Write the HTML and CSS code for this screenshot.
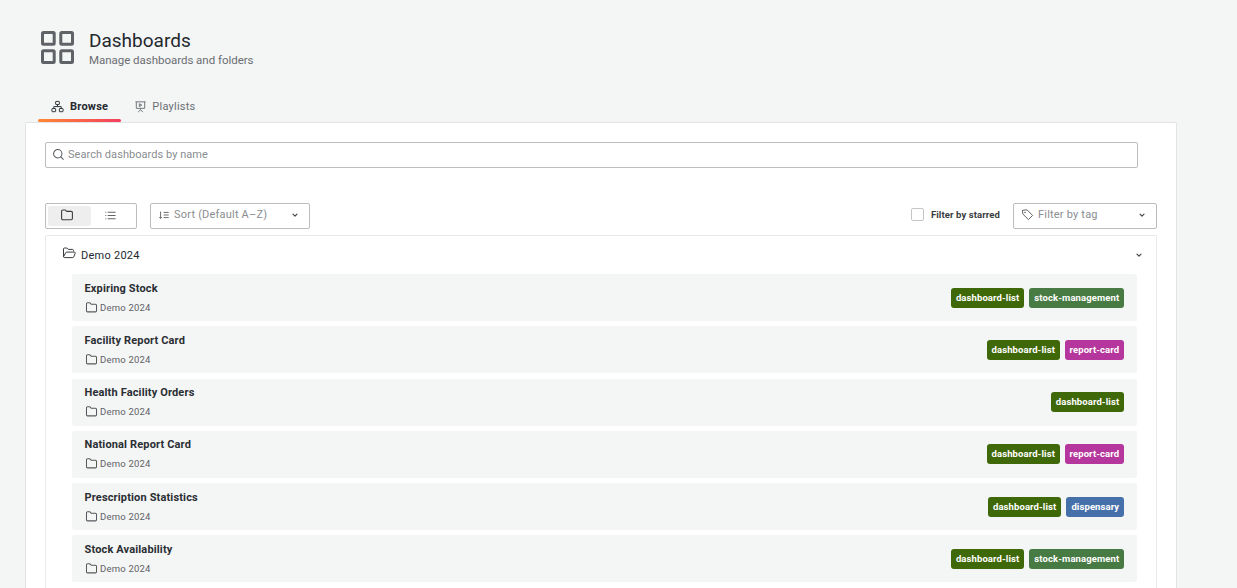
FILE: index.html
```html
<!DOCTYPE html>
<html lang="en">
<head>
<meta charset="utf-8">
<title>Dashboards</title>
<link rel="stylesheet" href="styles.css">
</head>
<body>
<svg class="defs" width="0" height="0" aria-hidden="true">
  <symbol id="folder" viewBox="0 0 14 14"><path d="M1.6 3.2c0-.7.5-1.2 1.2-1.2h2.5l1.3 1.4h4.6c.7 0 1.2.5 1.2 1.2v5.9c0 .7-.5 1.2-1.2 1.2H2.8c-.7 0-1.2-.5-1.2-1.2z" fill="none" stroke="currentColor" stroke-width="1.1" stroke-linejoin="round"/></symbol>
  <symbol id="chev" viewBox="0 0 10 10"><path d="M3 4.200l2 2 2-2" fill="none" stroke="currentColor" stroke-width="1.200" stroke-linecap="round" stroke-linejoin="round"/></symbol>
</svg>
<header class="page-header">
  <svg class="logo" viewBox="0 0 33 33" width="33" height="33" aria-hidden="true">
    <g fill="none" stroke="#5f6266" stroke-width="3">
      <rect x="1.500" y="1.500" width="11.700" height="11.700" rx="1"/>
      <rect x="19.800" y="1.500" width="11.700" height="11.700" rx="1"/>
      <rect x="1.500" y="19.800" width="11.700" height="11.700" rx="1"/>
      <rect x="19.800" y="19.800" width="11.700" height="11.700" rx="1"/>
    </g>
  </svg>
  <div class="titles">
    <h1>Dashboards</h1>
    <p>Manage dashboards and folders</p>
  </div>
</header>
<nav class="tabs">
  <a class="tab active">
    <svg viewBox="0 0 14 14" width="13" height="13" aria-hidden="true"><g fill="none" stroke="currentColor" stroke-width="1"><rect x="5" y="1.500" width="4" height="3.400" rx=".5"/><rect x="1" y="9.200" width="4" height="3.400" rx=".5"/><rect x="9" y="9.200" width="4" height="3.400" rx=".5"/><path d="M7 4.900v2.200M3 9.200V7.100h8v2.100"/></g></svg>
    Browse
  </a>
  <a class="tab">
    <svg viewBox="0 0 14 14" width="13" height="13" aria-hidden="true"><g fill="none" stroke="currentColor" stroke-width="1"><path d="M1.500 2h11M2.500 2v7h9V2M7 9v1.500M4.500 13l2.500-2.500L9.500 13"/><path d="M5.800 4l2.600 1.500-2.600 1.500z"/></g></svg>
    Playlists
  </a>
</nav>
<main class="card">
  <label class="search">
    <svg viewBox="0 0 14 14" width="13" height="13" aria-hidden="true"><circle cx="6.200" cy="6.200" r="4.500" fill="none" stroke="currentColor" stroke-width="1.100"/><path d="M9.500 9.500l2.700 2.700" stroke="currentColor" stroke-width="1.100" stroke-linecap="round"/></svg>
    <span>Search dashboards by name</span>
  </label>
  <div class="toolbar">
    <div class="left">
      <div class="toggle">
        <span class="seg on"><svg width="14" height="14"><use href="#folder"/></svg></span>
        <span class="seg"><svg viewBox="0 0 14 14" width="13" height="13" aria-hidden="true"><path d="M4 3.500h8.500M4 7h8.500M4 10.500h8.500M1.500 3.500h1M1.500 7h1M1.500 10.500h1" stroke="currentColor" stroke-width="1"/></svg></span>
      </div>
      <div class="select sort">
        <svg viewBox="0 0 14 14" width="12" height="12" aria-hidden="true"><path d="M3 3v8M1.500 9.500L3 11l1.500-1.500M6.500 4h6M6.500 7h6M6.500 10h6" fill="none" stroke="currentColor" stroke-width="1"/></svg>
        <span class="ph">Sort (Default A–Z)</span>
        <svg class="chev" width="10" height="10"><use href="#chev"/></svg>
      </div>
    </div>
    <div class="right">
      <label class="starred"><span class="check"></span>Filter by starred</label>
      <div class="select tag">
        <svg viewBox="0 0 14 14" width="13" height="13" aria-hidden="true"><path d="M1.500 2.500l5-.5 6 6-4.500 4.500-6-6z" fill="none" stroke="currentColor" stroke-width="1" stroke-linejoin="round"/><circle cx="4.300" cy="4.800" r=".8" fill="currentColor"/></svg>
        <span class="ph">Filter by tag</span>
        <svg class="chev" width="10" height="10"><use href="#chev"/></svg>
      </div>
    </div>
  </div>
  <section class="panel">
    <div class="folder-head">
      <svg class="open" viewBox="0 0 14 14" width="14" height="14" aria-hidden="true"><path d="M1.500 10.800V3c0-.6.400-1 1-1h2.400l1.300 1.400h4.300c.6 0 1 .4 1 1v1M1.500 10.800c.1.500.5.800 1 .8h8.300c.4 0 .7-.2.900-.6l1.500-3.800c.2-.6-.1-1.100-.7-1.100H4.600c-.4 0-.8.200-.9.600z" fill="none" stroke="currentColor" stroke-width="1" stroke-linejoin="round"/></svg>
      <span class="folder-name">Demo 2024</span>
      <svg class="chev" width="10" height="10"><use href="#chev"/></svg>
    </div>
    <div class="rows">
      <article class="row">
        <div class="info"><h2>Expiring Stock</h2><p><svg width="13" height="13"><use href="#folder"/></svg>Demo 2024</p></div>
        <div class="tags"><span class="t green">dashboard-list</span><span class="t stock">stock-management</span></div>
      </article>
      <article class="row">
        <div class="info"><h2>Facility Report Card</h2><p><svg width="13" height="13"><use href="#folder"/></svg>Demo 2024</p></div>
        <div class="tags"><span class="t green">dashboard-list</span><span class="t report">report-card</span></div>
      </article>
      <article class="row">
        <div class="info"><h2>Health Facility Orders</h2><p><svg width="13" height="13"><use href="#folder"/></svg>Demo 2024</p></div>
        <div class="tags"><span class="t green">dashboard-list</span></div>
      </article>
      <article class="row">
        <div class="info"><h2>National Report Card</h2><p><svg width="13" height="13"><use href="#folder"/></svg>Demo 2024</p></div>
        <div class="tags"><span class="t green">dashboard-list</span><span class="t report">report-card</span></div>
      </article>
      <article class="row">
        <div class="info"><h2>Prescription Statistics</h2><p><svg width="13" height="13"><use href="#folder"/></svg>Demo 2024</p></div>
        <div class="tags"><span class="t green">dashboard-list</span><span class="t disp">dispensary</span></div>
      </article>
      <article class="row">
        <div class="info"><h2>Stock Availability</h2><p><svg width="13" height="13"><use href="#folder"/></svg>Demo 2024</p></div>
        <div class="tags"><span class="t green">dashboard-list</span><span class="t stock">stock-management</span></div>
      </article>
    </div>
  </section>
</main>
</body>
</html>
```
FILE: styles.css
```css
* { box-sizing: border-box; }
html, body { height: 100%; overflow: hidden; }
body {
  display: flex;
  flex-direction: column;
  margin: 0;
  background: #f4f5f5;
  color: #24292e;
  font-family: Roboto, "Liberation Sans", sans-serif;
  font-size: 12px;
}
.defs { position: absolute; }
.page-header {
  display: flex;
  align-items: center;
  gap: 15px;
  padding: 30px 0 0 41px;
  height: 70px;
  flex: none;
}
.logo { flex: none; display: block; margin-top: -5px; }
.titles { margin-top: -3px; }
.titles h1 { margin: 0; font-size: 19px; font-weight: 400; line-height: 22px; color: #24292e; }
.titles p { margin: 1px 0 0; font-size: 11.500px; line-height: 14px; letter-spacing: -.03px; color: #6a6e73; }
.tabs {
  display: flex;
  flex: none;
  margin-left: 38px;
  padding-top: 20px;
  height: 52px;
}
.tab {
  display: flex;
  align-items: center;
  gap: 5px;
  height: 32px;
  padding: 0 13px;
  font-size: 11px;
  letter-spacing: .25px;
  color: #6a6e73;
}
.tab.active {
  gap: 6px;
  color: #24292e;
  font-weight: 700;
  position: relative;
}
.tab.active::after {
  content: "";
  position: absolute;
  left: 0;
  right: 0;
  bottom: 0;
  height: 3px;
  border-radius: 2px;
  background: linear-gradient(90deg, #ff8833, #f43f5e);
}
.card {
  display: flex;
  flex-direction: column;
  flex: 1;
  min-height: 0;
  overflow: hidden;
  margin: 0 60px 0 25px;
  background: #fff;
  border: 1px solid #e2e3e4;
  border-bottom: 0;
  border-radius: 2px 2px 0 0;
  padding: 19px 19px 0;
}
.search {
  display: flex;
  flex: none;
  align-items: center;
  gap: 3px;
  width: 1093px;
  height: 26px;
  padding: 0 6px 1px;
  border: 1px solid #bcbdbe;
  border-radius: 2px;
  color: #55585c;
  font-size: 11px;
  letter-spacing: .05px;
}
.search span { color: #8a8d91; }
.toolbar {
  display: flex;
  flex: none;
  justify-content: space-between;
  margin-top: 35px;
  height: 26px;
}
.left, .right { display: flex; align-items: center; }
.left { gap: 13px; }
.toggle {
  display: flex;
  width: 92px;
  height: 26px;
  padding: 2px;
  border: 1px solid #bcbdbe;
  border-radius: 2px;
}
.seg {
  display: flex;
  align-items: center;
  justify-content: center;
  width: 43px;
  flex: none;
  padding: 0 5px 2px 0;
  color: #55585c;
  border-radius: 2px;
}
.seg.on { background: #eeeeee; color: #3a3d40; }
.seg + .seg { width: 45px; padding-right: 7px; }
.select {
  display: flex;
  align-items: center;
  height: 26px;
  padding: 0 9px 3px 7px;
  border: 1px solid #bcbdbe;
  border-radius: 2px;
  color: #55585c;
  gap: 4px;
}
.select .ph { flex: 1; color: #8a8d91; font-size: 11px; letter-spacing: .2px; }
.sort { width: 160px; }
.tag { width: 144px; }
.chev { flex: none; color: #44474a; }
.starred {
  display: flex;
  align-items: center;
  gap: 7px;
  margin-right: 13px;
  padding-bottom: 3px;
  font-size: 9.500px;
  font-weight: 700;
  letter-spacing: .1px;
  color: #3a3d40;
}
.check {
  width: 13px;
  height: 13px;
  border: 1px solid #c4c5c6;
  border-radius: 2px;
}
.panel {
  flex: 1;
  min-height: 0;
  margin-top: 6px;
  border: 1px solid #e8e9ea;
  border-bottom: 0;
  border-radius: 2px 2px 0 0;
}
.folder-head {
  display: flex;
  align-items: center;
  gap: 5px;
  height: 38px;
  padding: 0 12px 0 16px;
  color: #3a3d40;
}
.open { margin-top: -4px; }
.folder-name { flex: 1; font-size: 11px; letter-spacing: .25px; color: #24292e; }
.rows {
  display: flex;
  flex-direction: column;
  gap: 5.250px;
  padding: 0 19px 0 26px;
}
.row {
  display: flex;
  flex: none;
  justify-content: space-between;
  align-items: center;
  height: 47px;
  padding: 0 13px 0 12.500px;
  background: #f4f5f5;
  border-radius: 2px;
}
.row h2 {
  margin: 0;
  font-size: 11px;
  line-height: 14px;
  font-weight: 700;
  letter-spacing: .15px;
  color: #2a2e33;
}
.row p {
  display: flex;
  align-items: center;
  gap: 2px;
  margin: 5px 0 0;
  font-size: 9.500px;
  line-height: 13px;
  letter-spacing: .2px;
  color: #5f6266;
}
.row p svg { color: #55585c; margin-left: .5px; }
.tags { display: flex; gap: 5px; }
.t {
  display: block;
  height: 20px;
  padding: 0 4.750px;
  border-radius: 3px;
  color: #fff;
  font-size: 9.500px;
  font-weight: 700;
  line-height: 19px;
  letter-spacing: .1px;
}
.green { background: #3f6809; }
.stock { background: #487b44; padding-left: 5.250px; }
.report { background: #b5369c; }
.disp { background: #4670aa; padding-left: 5.250px; }
```
